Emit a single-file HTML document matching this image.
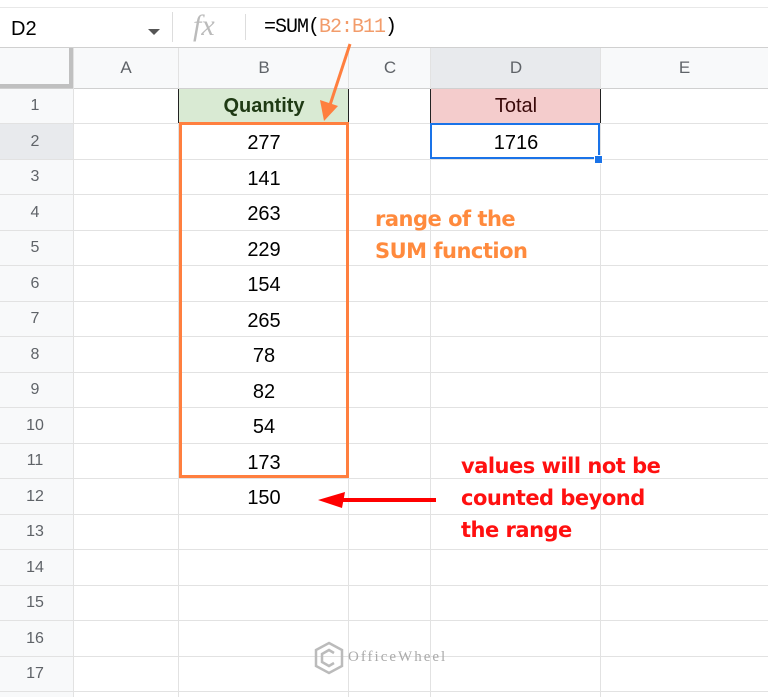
<!DOCTYPE html>
<html><head><style>
body{margin:0;width:768px;height:697px;overflow:hidden;background:#fff;font-family:"Liberation Sans",Arial,sans-serif;position:relative}
.a{position:absolute}
.hl{position:absolute;left:0;width:768px;height:1px;background:#e2e2e2}
.vl{position:absolute;top:48px;height:649px;width:1px;background:#e2e2e2}
.rn{position:absolute;left:0;width:70px;text-align:center;font-size:16px;color:#5f6368}
.c{position:absolute;left:179px;width:170px;text-align:center;font-size:20px;color:#000}
.ch{position:absolute;top:48px;height:40px;line-height:40px;text-align:center;font-size:17px;color:#5f6368}
</style></head><body>
<div class="hl" style="top:7px;background:#e8e8e8"></div>
<div class="hl" style="top:47px;background:#d0d0d0"></div>
<div class="a" style="left:11px;top:18px;font-size:20px;color:#000">D2</div>
<div class="a" style="left:148px;top:29px;width:0;height:0;border-left:6px solid transparent;border-right:6px solid transparent;border-top:6px solid #555"></div>
<div class="a" style="left:172px;top:12px;width:1px;height:30px;background:#ddd"></div>
<div class="a" style="left:193px;top:9px;font-family:'Liberation Serif',serif;font-style:italic;font-size:30px;color:#bbb">fx</div>
<div class="a" style="left:245px;top:14px;width:1px;height:26px;background:#ddd"></div>
<div class="a" style="left:264px;top:16px;font-family:'Liberation Mono',monospace;font-size:20px;color:#000;letter-spacing:-1px">=SUM(<span style="color:#f29c6b">B2:B11</span>)</div>
<!-- header row -->
<div class="a" style="left:0;top:48px;width:768px;height:40px;background:#f8f9fa"></div>
<div class="a" style="left:431px;top:48px;width:170px;height:40px;background:#e8eaed"></div>
<div class="a" style="left:0;top:88px;width:73px;height:609px;background:#f8f9fa"></div>
<div class="a" style="left:0;top:123px;width:73px;height:36px;background:#e8eaed"></div>
<div class="a" style="left:69px;top:48px;width:4px;height:40px;background:#c0c0c0"></div>
<div class="a" style="left:0;top:84px;width:73px;height:4px;background:#c0c0c0"></div>
<div class="ch" style="left:74px;width:104px">A</div>
<div class="ch" style="left:179px;width:170px">B</div>
<div class="ch" style="left:349px;width:82px">C</div>
<div class="ch" style="left:431px;width:170px">D</div>
<div class="ch" style="left:601px;width:167px">E</div>
<div class="a" style="left:179px;top:89px;width:170px;height:34px;background:#d9ead3"></div>
<div class="a" style="left:431px;top:89px;width:170px;height:34px;background:#f4cccc"></div>
<div class="hl" style="top:88px;background:#d0d0d0"></div>
<div class="hl" style="top:123px"></div><div class="hl" style="top:159px"></div><div class="hl" style="top:194px"></div><div class="hl" style="top:230px"></div><div class="hl" style="top:265px"></div><div class="hl" style="top:301px"></div><div class="hl" style="top:336px"></div><div class="hl" style="top:372px"></div><div class="hl" style="top:407px"></div><div class="hl" style="top:443px"></div><div class="hl" style="top:478px"></div><div class="hl" style="top:514px"></div><div class="hl" style="top:549px"></div><div class="hl" style="top:585px"></div><div class="hl" style="top:620px"></div><div class="hl" style="top:656px"></div><div class="hl" style="top:691px"></div>
<div class="vl" style="left:73px"></div><div class="vl" style="left:178px"></div><div class="vl" style="left:348px"></div><div class="vl" style="left:430px"></div><div class="vl" style="left:600px"></div>
<div class="a" style="left:178px;top:89px;width:1px;height:34px;background:#222"></div>
<div class="a" style="left:348px;top:89px;width:1px;height:34px;background:#222"></div>
<div class="a" style="left:430px;top:89px;width:1px;height:34px;background:#222"></div>
<div class="a" style="left:600px;top:89px;width:1px;height:34px;background:#222"></div>
<div class="rn" style="top:97px">1</div><div class="rn" style="top:133px">2</div><div class="rn" style="top:168px">3</div><div class="rn" style="top:204px">4</div><div class="rn" style="top:239px">5</div><div class="rn" style="top:275px">6</div><div class="rn" style="top:310px">7</div><div class="rn" style="top:346px">8</div><div class="rn" style="top:381px">9</div><div class="rn" style="top:417px">10</div><div class="rn" style="top:452px">11</div><div class="rn" style="top:488px">12</div><div class="rn" style="top:523px">13</div><div class="rn" style="top:559px">14</div><div class="rn" style="top:594px">15</div><div class="rn" style="top:630px">16</div><div class="rn" style="top:665px">17</div>
<div class="c" style="top:95px;color:#1f3a14;font-weight:bold;font-size:20px">Quantity</div>
<div class="c" style="top:132px">277</div><div class="c" style="top:168px">141</div><div class="c" style="top:203px">263</div><div class="c" style="top:239px">229</div><div class="c" style="top:274px">154</div><div class="c" style="top:310px">265</div><div class="c" style="top:345px">78</div><div class="c" style="top:381px">82</div><div class="c" style="top:416px">54</div><div class="c" style="top:452px">173</div><div class="c" style="top:487px">150</div>
<div class="c" style="left:431px;top:95px;color:#3a0a0a">Total</div>
<div class="c" style="left:431px;top:132px">1716</div>
<div class="a" style="left:430px;top:123px;width:166px;height:32px;border:2px solid #1a73e8"></div>
<div class="a" style="left:594px;top:155px;width:7px;height:7px;background:#1a73e8;border:1px solid #fff"></div>
<div class="a" style="left:179px;top:122px;width:164px;height:350px;border:3px solid #ff7f3f"></div>
<svg class="a" style="left:0;top:0" width="768" height="697">
<line x1="350" y1="44" x2="330" y2="105" stroke="#ff7f3f" stroke-width="3"/>
<polygon points="324,121 320,100 338,106" fill="#ff7f3f"/>
<line x1="436" y1="500" x2="340" y2="500" stroke="#f00" stroke-width="4"/>
<polygon points="318,500 345,492 342,508" fill="#f00"/>
</svg>
<div class="a" style="left:375px;top:203px;font-size:21px;font-weight:bold;color:#ff8a3d;line-height:32px;font-family:'DejaVu Sans',sans-serif;letter-spacing:-0.5px">range of the<br>SUM function</div>
<div class="a" style="left:461px;top:450px;font-size:21px;font-weight:bold;color:#ff1010;line-height:32px;font-family:'DejaVu Sans',sans-serif;letter-spacing:-0.5px">values will not be<br>counted beyond<br>the range</div>
<svg class="a" style="left:313px;top:641px" width="32" height="34"><polygon points="16,2 29,9 29,25 16,32 3,25 3,9" fill="none" stroke="#bbb" stroke-width="2.5"/><path d="M21,12 L16,9 9,13 9,21 16,25 21,22" fill="none" stroke="#bbb" stroke-width="2.5"/></svg>
<div class="a" style="left:348px;top:649px;font-family:'Liberation Serif',serif;font-size:15px;letter-spacing:2px;color:#aaa">OfficeWheel</div>
</body></html>
